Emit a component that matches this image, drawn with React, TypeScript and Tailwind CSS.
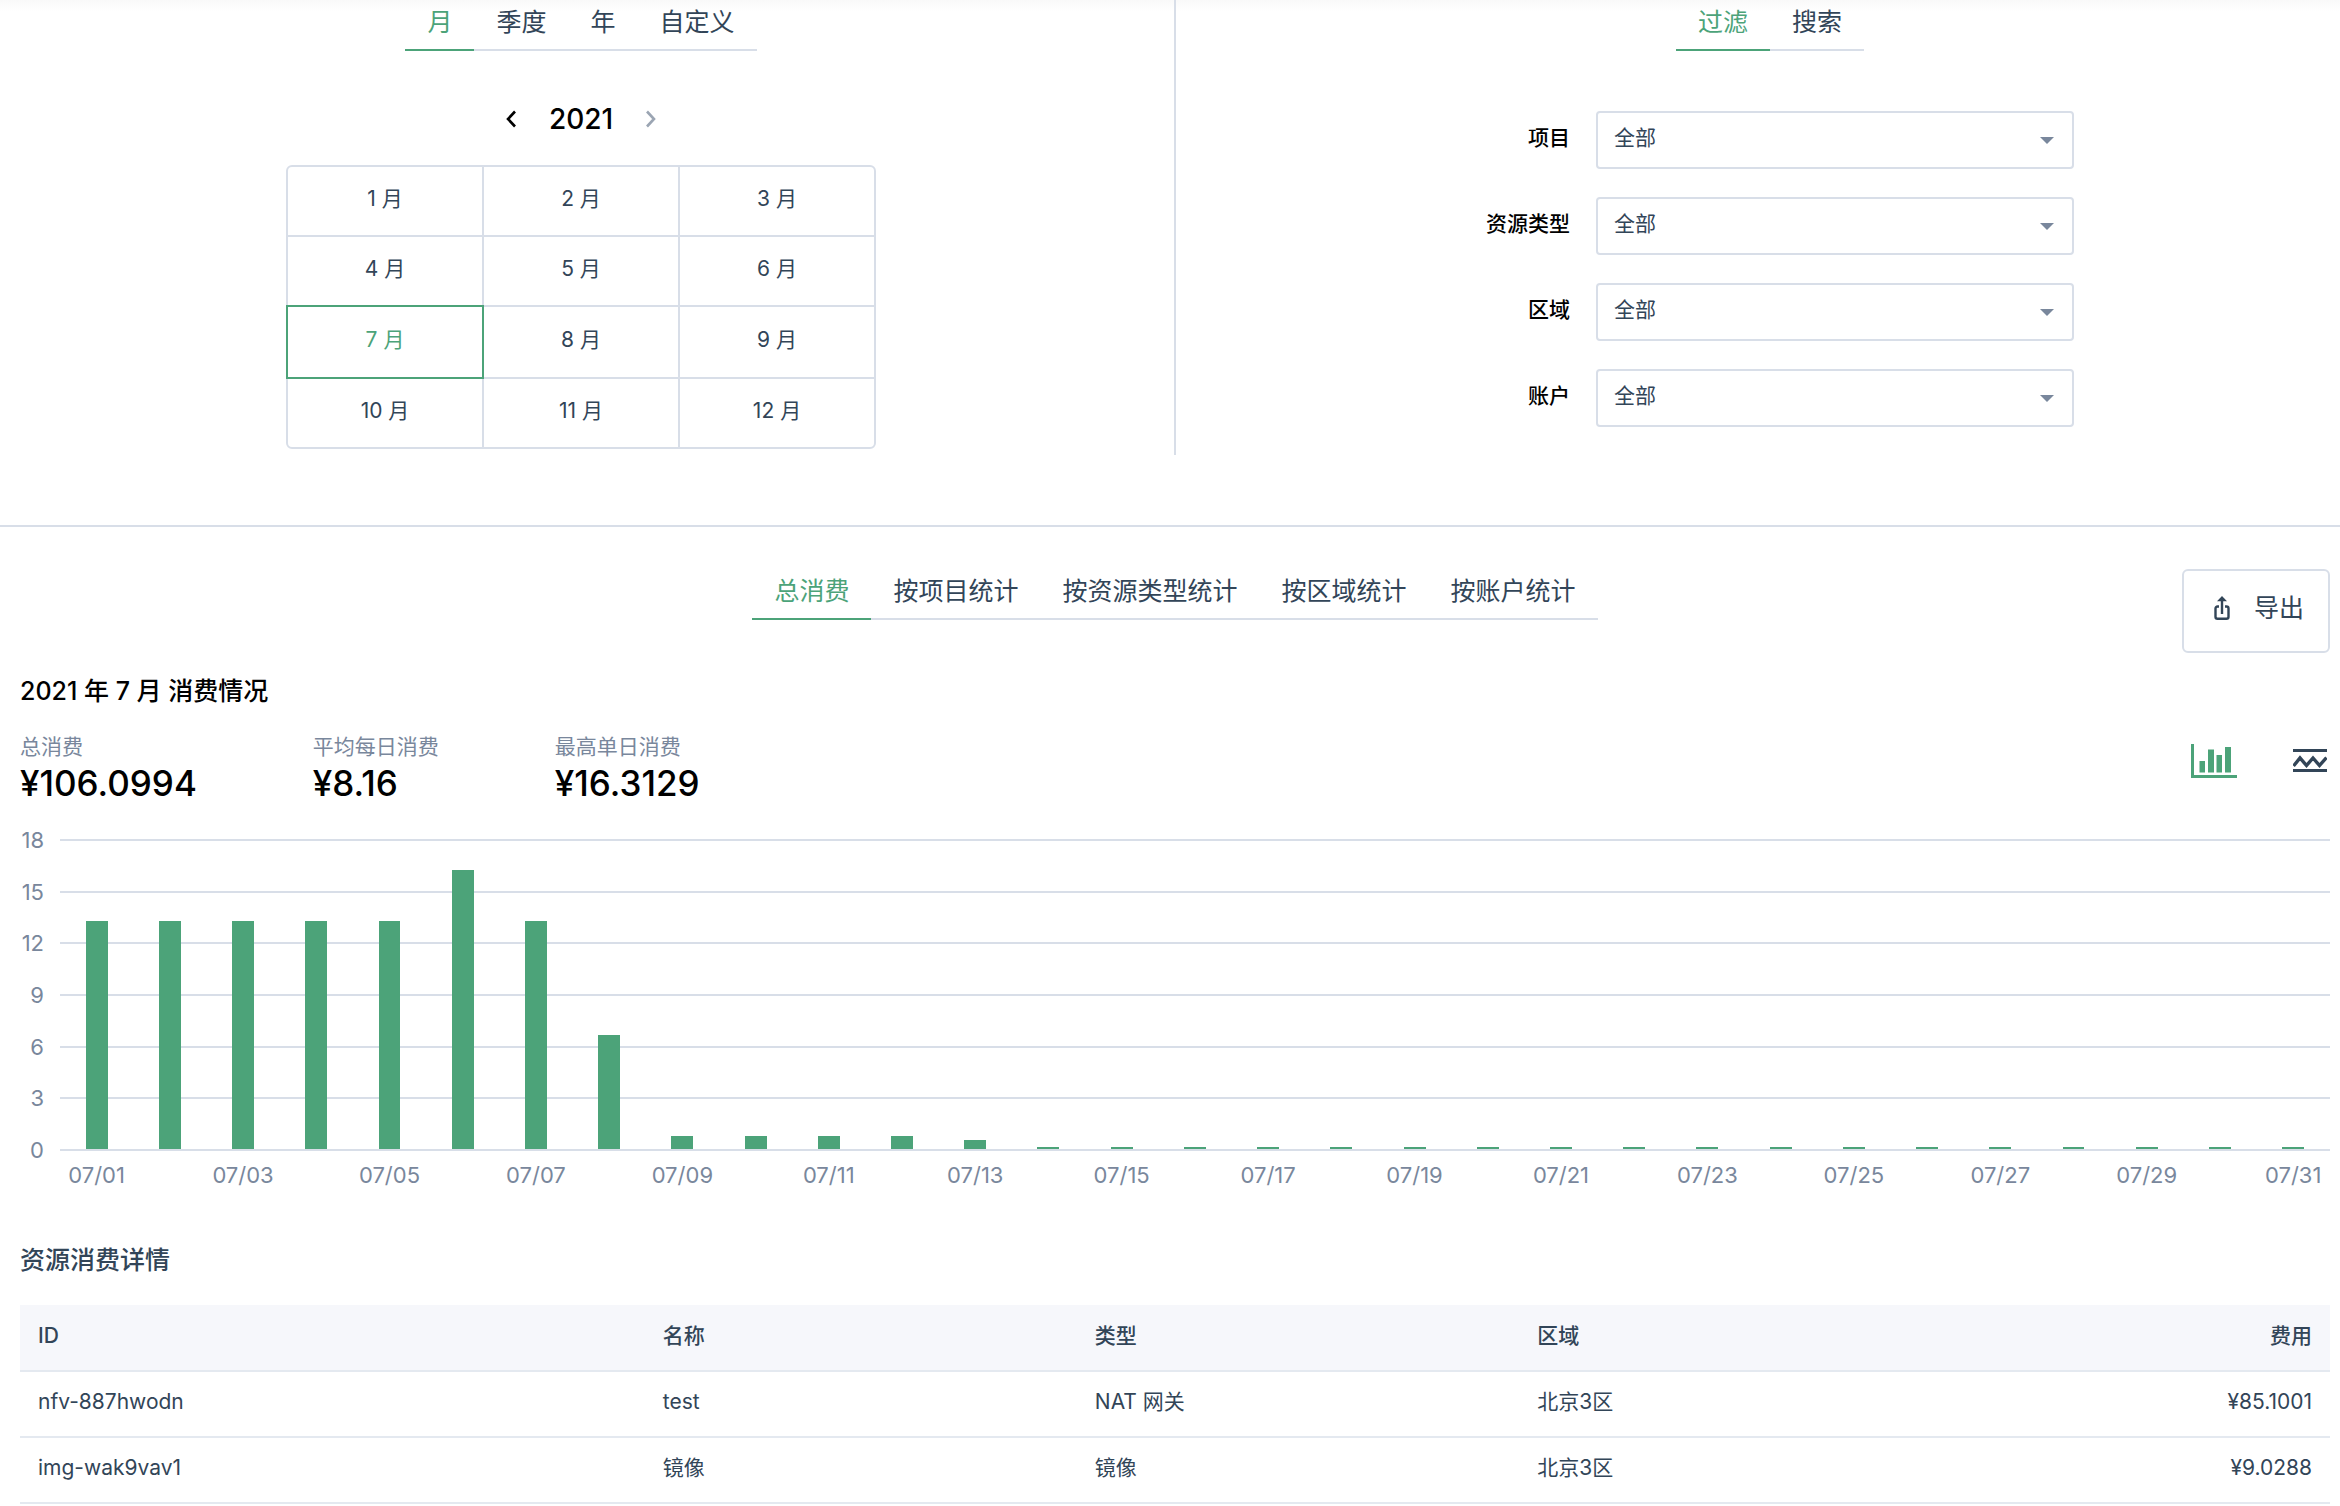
import { useState } from "react";

const periodTabs = ["月", "季度", "年", "自定义"];
const filterTabs = ["过滤", "搜索"];
const reportTabs = ["总消费", "按项目统计", "按资源类型统计", "按区域统计", "按账户统计"];
const months = Array.from({ length: 12 }, (_, i) => i + 1);

const filters = [
  { id: "project", label: "项目" },
  { id: "resource-type", label: "资源类型" },
  { id: "zone", label: "区域" },
  { id: "account", label: "账户" },
];

const stats = [
  { label: "总消费", value: "¥106.0994" },
  { label: "平均每日消费", value: "¥8.16" },
  { label: "最高单日消费", value: "¥16.3129" },
];

const maxCost = 18;
const ticks = [18, 15, 12, 9, 6, 3, 0];
const dailyCosts = [
  13.34, 13.34, 13.34, 13.34, 13.34, 16.3129, 13.34, 6.64, 0.76, 0.76, 0.76, 0.76, 0.52,
  ...Array.from({ length: 18 }, () => 0.13),
];

const resources = [
  { id: "nfv-887hwodn", name: "test", type: "NAT 网关", zone: "北京3区", cost: "¥85.1001" },
  { id: "img-wak9vav1", name: "镜像", type: "镜像", zone: "北京3区", cost: "¥9.0288" },
];

function Tabs({ items, label }: { items: string[]; label: string }) {
  const [active, setActive] = useState(0);
  return (
    <div role="tablist" aria-label={label} className="flex">
      {items.map((item, i) => (
        <button
          key={item}
          type="button"
          role="tab"
          aria-selected={i === active}
          onClick={() => setActive(i)}
          className={
            i === active
              ? "border-b-2 border-[#4ca379] px-[22px] pt-1 pb-[9px] text-[25px] leading-9 text-[#4ca379]"
              : "border-b-2 border-[#d8dee8] px-[22px] pt-1 pb-[9px] text-[25px] leading-9 text-[#324558]"
          }
        >
          {item}
        </button>
      ))}
    </div>
  );
}

function Chevron({ direction }: { direction: "left" | "right" }) {
  return (
    <svg width="12" height="18" viewBox="0 0 12 18" fill="none" stroke="currentColor" strokeWidth="2.6" aria-hidden="true">
      <path d={direction === "left" ? "M10 1.5 3 9l7 7.5" : "M2 1.5 9 9l-7 7.5"} />
    </svg>
  );
}

function MonthPicker() {
  const [year, setYear] = useState(2021);
  const [month, setMonth] = useState(7);
  return (
    <>
      <div className="mt-12 flex items-center gap-8 leading-10">
        <button type="button" aria-label="上一年" onClick={() => setYear(year - 1)} className="text-black">
          <Chevron direction="left" />
        </button>
        <span className="text-[28px] font-medium text-black">{year}</span>
        <button type="button" aria-label="下一年" onClick={() => setYear(year + 1)} className="text-[#9ba5b3]">
          <Chevron direction="right" />
        </button>
      </div>
      <div className="mt-[26px] grid w-[590px] grid-cols-3 pt-0.5 pl-0.5">
        {months.map((m) => (
          <button
            key={m}
            type="button"
            aria-pressed={m === month}
            onClick={() => setMonth(m)}
            className={
              m === month
                ? "relative -mt-0.5 -ml-0.5 h-[74px] border-2 border-[#4ca379] pb-1 text-[21px] text-[#4ca379]"
                : "-mt-0.5 -ml-0.5 min-h-[72px] border-2 border-[#d8dee8] pb-1 text-[21px] text-[#324558] first:rounded-tl-md last:rounded-br-md nth-3:rounded-tr-md nth-10:rounded-bl-md"
            }
          >
            {m} 月
          </button>
        ))}
      </div>
    </>
  );
}

function FilterForm() {
  return (
    <form className="mt-[60px] grid gap-7">
      {filters.map(({ id, label }) => (
        <div key={id} className="flex items-center gap-[26px]">
          <label htmlFor={id} className="w-[104px] pb-1 text-right font-medium text-black">
            {label}
          </label>
          <div className="grid w-[478px] items-center">
            <select
              id={id}
              className="col-start-1 row-start-1 h-[58px] appearance-none rounded-sm border-2 border-[#d8dee8] bg-white px-4 pb-1 text-[#324558]"
            >
              <option>全部</option>
            </select>
            <svg
              width="14"
              height="7"
              viewBox="0 0 14 7"
              className="pointer-events-none col-start-1 row-start-1 mr-5 justify-self-end fill-[#79879c]"
              aria-hidden="true"
            >
              <path d="M0 0h14L7 7z" />
            </svg>
          </div>
        </div>
      ))}
    </form>
  );
}

function ExportIcon() {
  return (
    <svg width="16" height="24" viewBox="0 0 16 24" fill="none" stroke="currentColor" strokeWidth="2.4" aria-hidden="true">
      <path d="M5 10.5H3.500A2 2 0 0 0 1.500 12.500v8.300a2 2 0 0 0 2 2h9a2 2 0 0 0 2-2v-8.300a2 2 0 0 0-2-2H11" />
      <path d="M8 4v14" />
      <path d="M8 0l5 5.200H3z" fill="currentColor" stroke="none" />
    </svg>
  );
}

function BarIcon() {
  return (
    <svg width="46" height="34" viewBox="0 0 46 34" fill="currentColor" aria-hidden="true">
      <path d="M0 0h3v31h43v3H0zM8.500 17H14v11.500H8.500zM17 5.500h6v23h-6zM25.500 11H31v17.500h-5.500zM34 3h6v25.500h-6z" />
    </svg>
  );
}

function LineIcon() {
  return (
    <svg width="34" height="24" viewBox="0 0 34 24" fill="none" stroke="currentColor" strokeWidth="3" aria-hidden="true">
      <path d="M0 1.500h34M0 21.500h34" />
      <path d="M.5 17 7 9l6.500 7.500L20 9l6.500 7.500L33.500 8.500" strokeWidth="3.400" />
    </svg>
  );
}

function CostChart() {
  return (
    <div className="mt-[21px] grid grid-cols-[24px_1fr] gap-x-4 text-[22px] text-[#79879c]">
      <div className="flex h-[342px] flex-col items-end justify-between leading-8">
        {ticks.map((t) => (
          <span key={t}>{t}</span>
        ))}
      </div>
      <div className="mt-[15px] grid h-[312px]">
        <div className="col-start-1 row-start-1 flex flex-col justify-between">
          {ticks.map((t) => (
            <div key={t} className="h-0.5 bg-[#d8dee8]" />
          ))}
        </div>
        <div className="col-start-1 row-start-1 flex items-end pt-0.5 pb-0.5">
          {dailyCosts.map((cost, i) => (
            <div key={i} className="flex h-full flex-1 items-end justify-center">
              <div className="w-[30%] bg-[#4ca379]" style={{ height: `${(cost / maxCost) * 100}%` }} />
            </div>
          ))}
        </div>
      </div>
      <div className="col-start-2 -mt-[7px] flex leading-8">
        {dailyCosts.map((_, i) => (
          <div key={i} className="flex w-0 flex-1 justify-center whitespace-nowrap">
            {i % 2 === 0 && <span>07/{String(i + 1).padStart(2, "0")}</span>}
          </div>
        ))}
      </div>
    </div>
  );
}

function ResourceTable() {
  return (
    <table className="mt-[27px] w-full table-fixed border-collapse text-left text-[#324558]">
      <thead>
        <tr className="h-[66px] border-b-2 border-[#e4e9f0] bg-[#f6f7fb]">
          <th scope="col" className="w-[27.05%] px-[18px] pb-1 font-medium">ID</th>
          <th scope="col" className="w-[18.7%] px-[18px] pb-1 font-medium">名称</th>
          <th scope="col" className="w-[19.15%] px-[18px] pb-1 font-medium">类型</th>
          <th scope="col" className="px-[18px] pb-1 font-medium">区域</th>
          <th scope="col" className="px-[18px] pb-1 text-right font-medium">费用</th>
        </tr>
      </thead>
      <tbody>
        {resources.map((r) => (
          <tr key={r.id} className="h-[66px] border-b-2 border-[#e4e9f0]">
            <td className="px-[18px] pb-1">{r.id}</td>
            <td className="px-[18px] pb-1">{r.name}</td>
            <td className="px-[18px] pb-1">{r.type}</td>
            <td className="px-[18px] pb-1">{r.zone}</td>
            <td className="px-[18px] pb-1 text-right">{r.cost}</td>
          </tr>
        ))}
      </tbody>
    </table>
  );
}

export default function App() {
  return (
    <main className="bg-white bg-linear-to-b from-[#f9f9f9] to-white to-[12px] font-['Inter','Noto_Sans_CJK_SC',sans-serif] text-[21px] leading-8 text-[#324558]">
      <div className="border-b-2 border-[#d8dee8] pb-[70px]">
        <div className="grid grid-cols-[1176fr_1164fr]">
          <section className="flex flex-col items-center border-r-2 border-[#d8dee8] pr-3 pb-1.5">
            <Tabs items={periodTabs} label="账单周期" />
            <MonthPicker />
          </section>
          <section className="flex flex-col items-center pl-6">
            <Tabs items={filterTabs} label="筛选方式" />
            <FilterForm />
          </section>
        </div>
      </div>

      <section className="pt-[42px] pr-2.5 pl-5">
        <div className="grid grid-cols-[1fr_auto_1fr] items-start">
          <div className="col-start-2">
            <Tabs items={reportTabs} label="统计维度" />
          </div>
          <button
            type="button"
            className="flex h-[84px] w-[148px] items-center justify-center gap-6 justify-self-end rounded-md border-2 border-[#d8dee8] pb-1.5 pl-1.5 text-[25px] text-[#324558]"
          >
            <ExportIcon />
            导出
          </button>
        </div>

        <h2 className="mt-5 text-[25px] leading-9 font-medium text-black">2021 年 7 月 消费情况</h2>
        <div className="mt-[22px] flex items-start justify-between">
          <dl className="flex gap-[116px]">
            {stats.map((s) => (
              <div key={s.label}>
                <dt className="text-[#79879c]">{s.label}</dt>
                <dd className="text-[35px] leading-10 font-medium text-black">{s.value}</dd>
              </div>
            ))}
          </dl>
          <div className="mt-[13px] mr-[3px] flex items-center gap-14">
            <button type="button" aria-label="柱状图" aria-pressed="true" className="text-[#4ca379]">
              <BarIcon />
            </button>
            <button type="button" aria-label="折线图" aria-pressed="false" className="text-[#324558]">
              <LineIcon />
            </button>
          </div>
        </div>

        <CostChart />

        <h2 className="mt-[51px] text-[25px] leading-9 font-medium">资源消费详情</h2>
        <ResourceTable />
      </section>
    </main>
  );
}
